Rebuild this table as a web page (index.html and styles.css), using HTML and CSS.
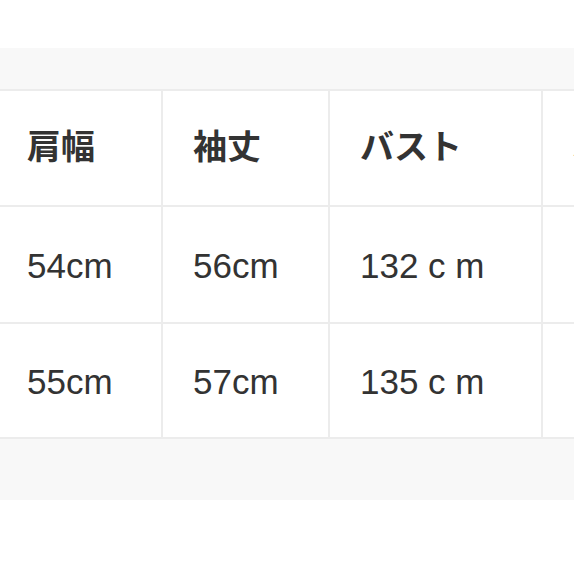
FILE: index.html
```html
<!DOCTYPE html>
<html lang="ja">
<head>
<meta charset="utf-8">
<link rel="stylesheet" href="styles.css">
</head>
<body>
<div class="band">
  <div class="grid">
    <div class="cell head">肩幅</div>
    <div class="cell head">袖丈</div>
    <div class="cell head">バスト</div>
    <div class="cell head">着丈</div>
    <div class="cell">54cm</div>
    <div class="cell">56cm</div>
    <div class="cell">132 c m</div>
    <div class="cell">70cm</div>
    <div class="cell">55cm</div>
    <div class="cell">57cm</div>
    <div class="cell">135 c m</div>
    <div class="cell">72cm</div>
  </div>
</div>
</body>
</html>
```
FILE: styles.css
```css
html, body {
  margin: 0;
  padding: 0;
  background: #ffffff;
  overflow: hidden;
}
.band {
  margin-top: 48px;
  background: #f8f8f8;
  padding: 41px 0 61px;
  overflow: hidden;
}
.grid {
  display: grid;
  grid-template-columns: 164px 165px 211px 220px;
  grid-template-rows: 114px 115px 113px;
  gap: 2px;
  padding: 2px 0;
  margin-left: -3px;
  width: 766px;
  background: #ececec;
}
.cell {
  background: #ffffff;
  display: flex;
  align-items: center;
  padding-left: 30px;
  padding-top: 3px;
  font-family: "Liberation Sans", "Noto Sans CJK JP", sans-serif;
  font-size: 35px;
  color: #333333;
  white-space: nowrap;
}
.head {
  font-family: "Noto Sans CJK JP", sans-serif;
  font-weight: 700;
  font-size: 34px;
  padding-top: 0;
  padding-bottom: 8px;
  color: #333333;
}
```
